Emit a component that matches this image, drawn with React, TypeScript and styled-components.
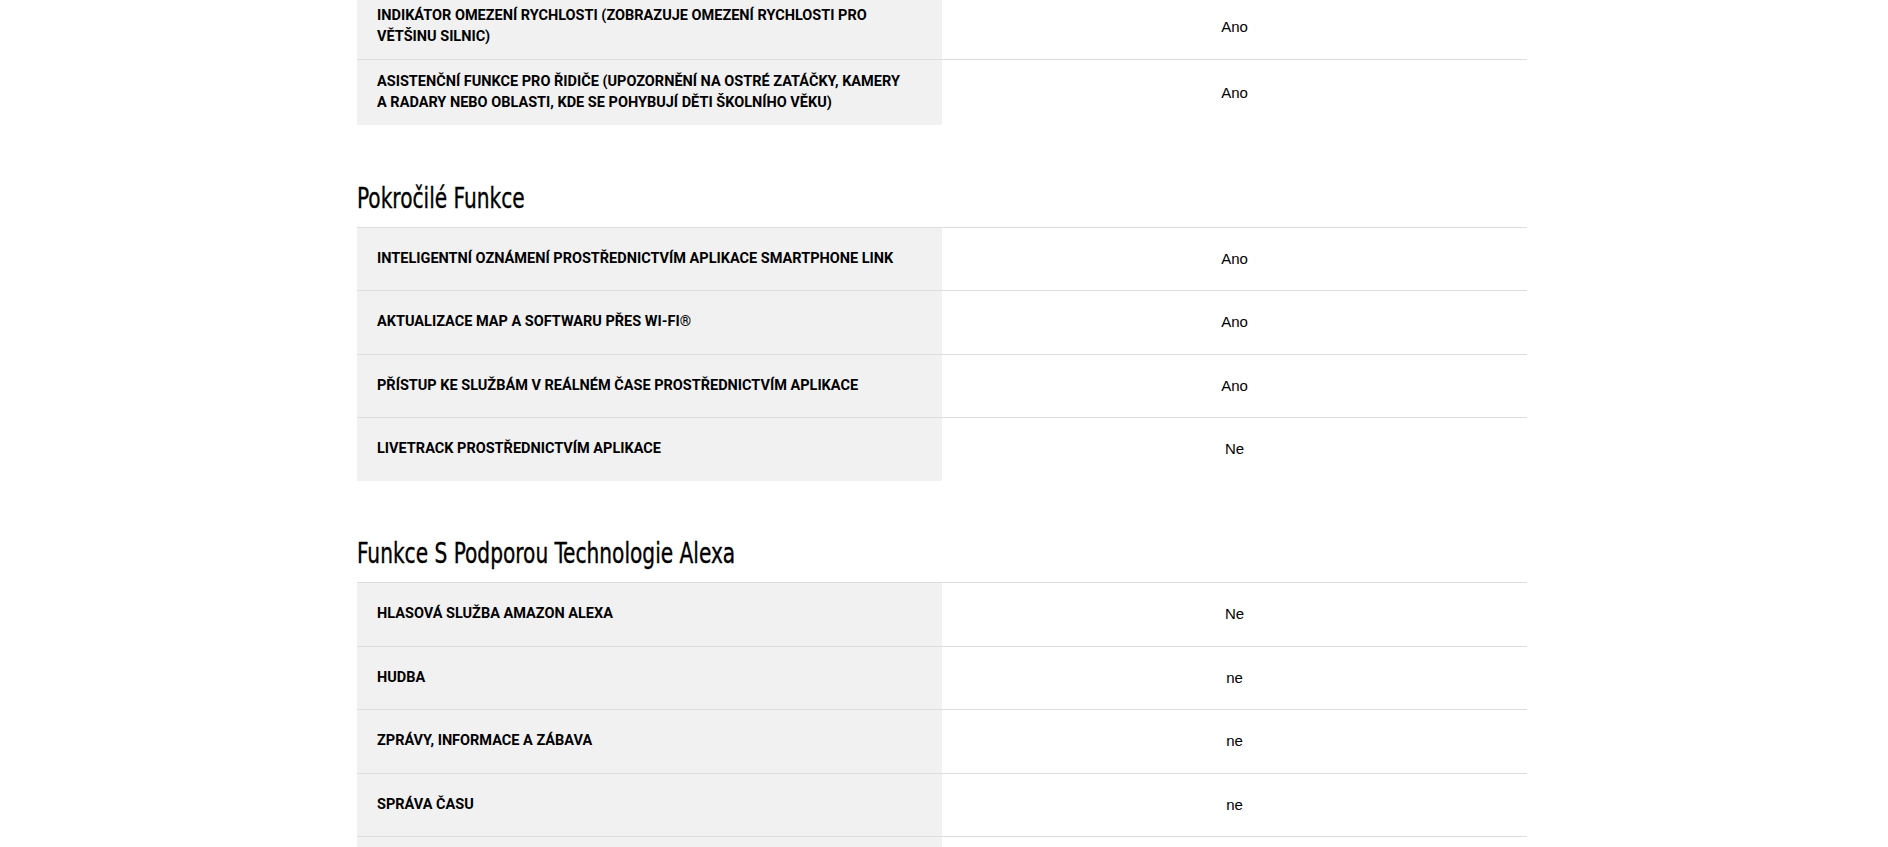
import React from "react";
import styled, { createGlobalStyle } from "styled-components";

const GlobalStyle = createGlobalStyle`
  html, body {
    margin: 0;
    padding: 0;
    background: #ffffff;
    overflow: hidden;
  }
  body {
    font-family: Roboto, "Liberation Sans", Arial, sans-serif;
    color: #000;
  }
  * { box-sizing: border-box; }
`;

const Page = styled.div`
  width: 1174px;
  margin: -7px auto 0;
  padding-right: 4px;
`;

const Section = styled.section`
  & + & {
    margin-top: 56.5px;
  }
`;

const Heading = styled.h2`
  margin: 0 0 11.5px;
  font-family: "DejaVu Sans Condensed", "Liberation Sans Narrow", "Arial Narrow", sans-serif;
  font-weight: 400;
  font-size: 28px;
  line-height: 1.2;
  color: #000;
  white-space: nowrap;
`;

const HeadingText = styled.span`
  display: inline-block;
  transform: scaleX(0.8);
  transform-origin: left center;
  -webkit-text-stroke: 0.35px #000;
`;

const Table = styled.div`
  display: flex;
  flex-direction: column;
`;

const Row = styled.div`
  display: grid;
  grid-template-columns: 1fr 1fr;
  border-top: 1px solid #dddddd;
`;

const Label = styled.div`
  display: flex;
  align-items: center;
  min-height: 62.5px;
  padding: 12px 20px;
  background: #f1f1f1;
  font-family: Roboto, "Liberation Sans", sans-serif;
  font-weight: 700;
  font-size: 14.5px;
  line-height: 20.5px;
  text-transform: uppercase;
  color: #000;
`;

const Value = styled.div`
  display: flex;
  align-items: center;
  justify-content: center;
  padding: 12px 20px;
  font-family: "Liberation Sans", Arial, sans-serif;
  font-size: 15px;
  line-height: 20px;
  color: #000;
`;

type Spec = { label: string; value: string };
type Group = { title?: string; rows: Spec[] };

const groups: Group[] = [
  {
    rows: [
      {
        label: "Indikátor omezení rychlosti (zobrazuje omezení rychlosti pro většinu silnic)",
        value: "Ano",
      },
      {
        label:
          "Asistenční funkce pro řidiče (upozornění na ostré zatáčky, kamery a\u00a0radary nebo oblasti, kde se pohybují děti školního věku)",
        value: "Ano",
      },
    ],
  },
  {
    title: "Pokročilé Funkce",
    rows: [
      { label: "Inteligentní oznámení prostřednictvím aplikace Smartphone Link", value: "Ano" },
      { label: "Aktualizace map a softwaru přes Wi-Fi®", value: "Ano" },
      { label: "Přístup ke službám v reálném čase prostřednictvím aplikace", value: "Ano" },
      { label: "LiveTrack prostřednictvím aplikace", value: "Ne" },
    ],
  },
  {
    title: "Funkce S Podporou Technologie Alexa",
    rows: [
      { label: "Hlasová služba Amazon Alexa", value: "Ne" },
      { label: "Hudba", value: "ne" },
      { label: "Zprávy, informace a zábava", value: "ne" },
      { label: "Správa času", value: "ne" },
      { label: "Chytrá domácnost", value: "ne" },
    ],
  },
];

export default function App() {
  return (
    <>
      <GlobalStyle />
      <Page>
        {groups.map((g, gi) => (
          <Section key={gi}>
            {g.title && (
              <Heading>
                <HeadingText>{g.title}</HeadingText>
              </Heading>
            )}
            <Table>
              {g.rows.map((r, ri) => (
                <Row key={ri}>
                  <Label>{r.label}</Label>
                  <Value>{r.value}</Value>
                </Row>
              ))}
            </Table>
          </Section>
        ))}
      </Page>
    </>
  );
}
